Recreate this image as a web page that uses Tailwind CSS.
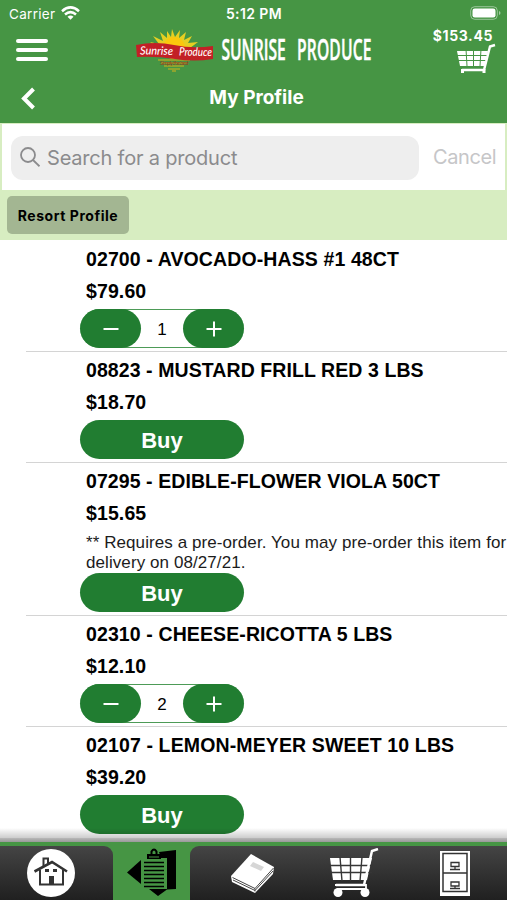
<!DOCTYPE html>
<html lang="en">
<head>
    <meta charset="UTF-8">
    <meta name="viewport" content="width=device-width, initial-scale=1.0">
    <title>Sunrise Produce - My Profile</title>
    <script src="https://cdn.jsdelivr.net/npm/@tailwindcss/browser@4"></script>
</head>
<body class="w-[507px] h-[900px] overflow-hidden bg-white text-black font-['Liberation_Sans',Arial,sans-serif] flex flex-col">
    <!-- Header -->
    <header class="h-[123px] shrink-0 bg-[#469544] text-white font-['Inter',sans-serif] flex flex-col">
        <div class="h-7 grid grid-cols-3 items-center pl-[9px] pr-[6px] text-[13.5px] leading-none">
            <div class="flex items-center gap-[6px]">
                <span class="tracking-[0.3px] pt-px">Carrier</span>
                <svg class="w-[19px] h-[14px] -mt-[2px]" viewBox="0 0 19 14" fill="none" stroke="#fff" stroke-width="2.5">
                    <path d="M1 5.2Q9.500-2.400 18 5.200"/>
                    <path d="M4 8.500Q9.500 3.700 15 8.500"/>
                    <path d="M9.500 13.800L6.500 10.700Q9.500 8.500 12.500 10.700Z" fill="#fff" stroke="none"/>
                </svg>
            </div>
            <span class="text-center font-semibold text-[14px] tracking-[0.4px] -ml-[2px] -mt-px">5:12 PM</span>
            <svg class="w-[31px] h-[14px] justify-self-end -mt-[2px]" viewBox="0 0 31 14">
                <rect x="0.700" y="0.700" width="26.600" height="12.600" rx="4" fill="none" stroke="#fff" stroke-opacity="0.450"/>
                <rect x="2.500" y="2.500" width="23" height="9" rx="2.300" fill="#fff"/>
                <path d="M29 5v4q1.500-.7 1.500-2T29 5z" fill="#fff" fill-opacity="0.500"/>
            </svg>
        </div>
        <div class="h-[49px] flex justify-between pl-4 pr-3">
            <button class="w-8 flex flex-col gap-[5px] pt-[11px]" aria-label="Menu">
                <span class="h-[4px] w-8 rounded-sm bg-white"></span>
                <span class="h-[4px] w-8 rounded-sm bg-white"></span>
                <span class="h-[4px] w-8 rounded-sm bg-white"></span>
            </button>
            <svg class="w-[240px] h-[49px] ml-[31px]" viewBox="0 0 240 49">
                <path d="M22 20L14 14 23 16 17 8 27 13 24 4 31 10 31 3 35 9 36 1 39 9 44 2 43 10 50 4 48 12 56 8 52 15 62 14 54 20Z" fill="#e6cf22"/>
                <circle cx="38" cy="20" r="11" fill="#fbc80d"/>
                <path d="M22 32h32M25 35h26M28 38h20M32 41h12M36 43h4" stroke="#a5a928" stroke-width="1.500"/>
                <path d="M0 17Q19 13 38 17T77 18L77 31Q58 34 39 31T1 29Z" fill="#c32026"/>
                <text x="4" y="27" transform="rotate(1 38 25)" fill="#fff" font-family="Lato" font-style="italic" font-weight="500" font-size="11.500" textLength="33" lengthAdjust="spacingAndGlyphs">Sunrise</text>
                <text x="43" y="27.500" transform="rotate(1 38 25)" fill="#fff" font-family="Lato" font-style="italic" font-weight="500" font-size="11.500" textLength="33" lengthAdjust="spacingAndGlyphs">Produce</text>
                <text x="24" y="36.500" fill="#9a3a20" font-family="Lato" font-style="italic" font-size="6" textLength="29">Simply the best</text>
                <text x="0" y="0" transform="translate(85.500 32) scale(.54 1)" fill="#fff" stroke="#fff" stroke-width="0.500" font-family="Open Sans" font-weight="600" font-size="29" textLength="119" lengthAdjust="spacing">SUNRISE</text>
                <text x="0" y="0" transform="translate(161 32) scale(.54 1)" fill="#fff" stroke="#fff" stroke-width="0.500" font-family="Open Sans" font-weight="600" font-size="29" textLength="138" lengthAdjust="spacing">PRODUCE</text>
            </svg>
            <div class="flex flex-col items-end">
                <span class="text-[14px] leading-[15px] font-bold tracking-[0.6px] mr-[2px]">$153.45</span>
                <svg class="w-[40px] h-[32px] -mt-px -mr-px" viewBox="0 0 40 32" fill="none" stroke="#fff">
                    <path d="M1 9h31l-3 15H4z" fill="#fff" stroke="none"/>
                    <path d="M0 13.500h33M2 18.500h30M10 7l1 17M17.500 7v17M25 7l-1 17" stroke="#469544" stroke-width="1"/>
                    <path d="M39 3l-5 1.500L28 28H6" stroke-width="2.400"/>
                    <path d="M6.500 27v4M28 27v4" stroke-width="3"/>
                </svg>
            </div>
        </div>
        <div class="relative h-[46px] flex items-center justify-center pb-[5px] pl-[6px]">
            <svg class="absolute left-[20px] top-[10px] w-[16px] h-[23px]" viewBox="0 0 16 23" fill="none" stroke="#fff" stroke-width="4"><path d="M13.500 2L4 11.500L13.500 21"/></svg>
            <h1 class="text-[19px] font-bold pt-px">My Profile</h1>
        </div>
    </header>

    <!-- Search -->
    <div class="h-[67px] shrink-0 bg-white border-l-2 border-r-2 border-t border-[#d7edc1] flex items-center pl-[9px] pt-px font-['Inter',sans-serif]">
        <div class="w-[408px] h-11 rounded-[12px] bg-[#eeeeee] flex items-center pl-[9px] text-[#8b8b8d]">
            <svg class="w-[20px] h-[20px] -mt-[2px]" viewBox="0 0 20 20" fill="none" stroke="currentColor" stroke-width="1.800"><circle cx="8" cy="8" r="7"/><path d="M13 13l6.500 6.300"/></svg>
            <span class="ml-[7px] text-[20px] tracking-[-0.2px]">Search for a product</span>
        </div>
        <span class="ml-[14px] text-[20px] text-[#c6c6c8] tracking-[-0.4px] -mt-[2px]">Cancel</span>
    </div>
    <div class="h-[50px] shrink-0 bg-[#d7edc1] pl-[7px] pt-[6px]">
        <button class="w-[122px] h-[38px] rounded-[5px] bg-[#a3b692] font-['Inter',sans-serif] font-bold text-[14px] tracking-[0.55px] whitespace-nowrap">Resort Profile</button>
    </div>

    <!-- Products -->
    <main class="relative h-[598px] overflow-hidden shrink-0">
        <article class="h-[112px] ml-[26px] pl-[55px] border-b border-[#d4d4d4]">
            <h2 class="pl-[5px] pt-[4px] h-[35px] leading-[30px] text-[19.5px] tracking-[0.11px] font-bold whitespace-nowrap">02700 - AVOCADO-HASS #1 48CT</h2>
            <p class="pl-[5px] h-[34px] leading-[32px] text-[19.5px] tracking-[0.11px] font-bold">$79.60</p>
            <div class="w-[164px] -ml-px h-[39px] rounded-full border-y border-[#4d9b57] flex items-center justify-between">
                <button class="w-[61px] h-[39px] rounded-full bg-[#217d31] text-white flex items-center justify-center"><svg class="w-4 h-4" viewBox="0 0 16 16" stroke="#fff" stroke-width="2"><path d="M.5 8h15"/></svg></button>
                <span class="text-[17px] pt-[2px]">1</span>
                <button class="w-[61px] h-[39px] rounded-full bg-[#217d31] text-white flex items-center justify-center"><svg class="w-4 h-4" viewBox="0 0 16 16" stroke="#fff" stroke-width="2"><path d="M.5 8h15M8 .5v15"/></svg></button>
            </div>
        </article>
        <article class="h-[111px] ml-[26px] pl-[55px] border-b border-[#d4d4d4]">
            <h2 class="pl-[5px] pt-[3px] h-[34px] leading-[30px] text-[19.5px] tracking-[0.08px] font-bold whitespace-nowrap">08823 - MUSTARD FRILL RED 3 LBS</h2>
            <p class="pl-[5px] h-[34px] leading-[32px] text-[19.5px] tracking-[0.11px] font-bold">$18.70</p>
            <button class="block w-[164px] -ml-px h-[39px] rounded-full bg-[#217d31] text-white text-[22px] font-bold leading-[41px]">Buy</button>
        </article>
        <article class="h-[153px] ml-[26px] pl-[55px] border-b border-[#d4d4d4]">
            <h2 class="pl-[5px] pt-[3px] h-[34px] leading-[30px] text-[19.5px] tracking-[0.08px] font-bold whitespace-nowrap">07295 - EDIBLE-FLOWER VIOLA 50CT</h2>
            <p class="pl-[5px] h-[36px] leading-[32px] text-[19.5px] tracking-[0.11px] font-bold">$15.65</p>
            <p class="pl-[5px] h-[40px] leading-[20px] text-[17px] tracking-[0.08px] whitespace-nowrap text-[#1c1c1c]">** Requires a pre-order. You may pre-order this item for<br>delivery on 08/27/21.</p>
            <button class="block w-[164px] -ml-px h-[39px] rounded-full bg-[#217d31] text-white text-[22px] font-bold leading-[41px]">Buy</button>
        </article>
        <article class="h-[111px] ml-[26px] pl-[55px] border-b border-[#d4d4d4]">
            <h2 class="pl-[5px] pt-[3px] h-[34px] leading-[30px] text-[19.5px] tracking-[0.11px] font-bold whitespace-nowrap">02310 - CHEESE-RICOTTA 5 LBS</h2>
            <p class="pl-[5px] h-[34px] leading-[32px] text-[19.5px] tracking-[0.11px] font-bold">$12.10</p>
            <div class="w-[164px] -ml-px h-[39px] rounded-full border-y border-[#4d9b57] flex items-center justify-between">
                <button class="w-[61px] h-[39px] rounded-full bg-[#217d31] text-white flex items-center justify-center"><svg class="w-4 h-4" viewBox="0 0 16 16" stroke="#fff" stroke-width="2"><path d="M.5 8h15"/></svg></button>
                <span class="text-[17px] pt-[2px]">2</span>
                <button class="w-[61px] h-[39px] rounded-full bg-[#217d31] text-white flex items-center justify-center"><svg class="w-4 h-4" viewBox="0 0 16 16" stroke="#fff" stroke-width="2"><path d="M.5 8h15M8 .5v15"/></svg></button>
            </div>
        </article>
        <article class="h-[111px] ml-[26px] pl-[55px]">
            <h2 class="pl-[5px] pt-[3px] h-[34px] leading-[30px] text-[19.5px] tracking-[0.13px] font-bold whitespace-nowrap">02107 - LEMON-MEYER SWEET 10 LBS</h2>
            <p class="pl-[5px] h-[34px] leading-[32px] text-[19.5px] tracking-[0.11px] font-bold">$39.20</p>
            <button class="block w-[164px] -ml-px h-[39px] rounded-full bg-[#217d31] text-white text-[22px] font-bold leading-[41px]">Buy</button>
        </article>
        <!-- shadow cast by the tab bar -->
        <div class="absolute inset-x-0 bottom-0 h-[10px] bg-linear-to-b from-black/0 to-black/20"></div>
    </main>

    <!-- Tab bar -->
    <div class="h-1 shrink-0 bg-linear-to-b from-[#b8b8b8] to-[#999999]"></div>
    <nav class="h-[58px] shrink-0 bg-[#469544] pt-1 flex">
        <div class="w-[113px] h-[54px] rounded-tr-[9px] bg-linear-to-b from-[#454545] to-[#202020] flex items-center pl-[27px]">
            <svg class="w-[48px] h-[48px]" viewBox="0 0 48 48" fill="none" stroke="#333">
                <circle cx="24" cy="24" r="24" fill="#fff" stroke="none"/>
                <path d="M7.500 22.500L25 13L40 22.500" stroke-width="2.600"/>
                <path d="M13 21v14.500h23V21M16.500 17V9.500H21V14" stroke-width="2"/>
                <path d="M18 20h4v3h-4zM26 20h4v3h-4zM22 27h5v8h-5z" fill="#333" stroke="none"/>
            </svg>
        </div>
        <div class="w-[77px] h-[54px] flex justify-center pt-[2px]">
            <svg class="w-[50px] h-[50px]" viewBox="0 0 50 50">
                <path d="M0 24.500L14 12v24z"/>
                <path d="M32 4L49 2v39l-9 .5L31 48l-9-7h18V10h-6z"/>
                <path d="M17 13h20v28H17z" fill="#469544"/>
                <path d="M17 14.500h20M17 18.500h20M17 22.500h20M17 26.500h20M17 30.500h20M17 34.500h20M17 38.500h20" stroke="#000" stroke-width="1.500"/>
                <path d="M20 6h14v5H20z"/>
                <path d="M24.500 7V3.500q2.500-4 5 0V7" fill="none" stroke="#000" stroke-width="2"/>
                <path d="M22 9h10" stroke="#469544" stroke-width="1"/>
            </svg>
        </div>
        <div class="w-[317px] h-[54px] rounded-tl-[9px] bg-linear-to-b from-[#454545] to-[#202020] flex items-start pl-[41px] pt-[2px]">
            <svg class="w-[44px] h-[42px] mt-[5px]" viewBox="0 0 44 42">
                <path d="M0 23L20 1L43 14L42 21L24 40L1 29Z" fill="#fff"/>
                <path d="M1.500 24.500L24 35.500L42.500 15M24 35.500V38.500M2 27L24 37.500L42 18" fill="none" stroke="#444" stroke-width="1"/>
                <path d="M22 9l11 5-3 4-11-5z" fill="#d6d6d6"/>
            </svg>
            <svg class="w-[50px] h-[50px] ml-[54px]" viewBox="0 0 50 50" fill="none" stroke="#fff">
                <path d="M1 10h42l-5 22H4z" fill="#fff" stroke="none"/>
                <path d="M0 17.500h44M1 24.500h42M11 9l2 24M21.500 9v24M33 9l-2 24" stroke="#363636" stroke-width="1.400"/>
                <path d="M49 1l-6 2L35 37H7" stroke-width="2.500"/>
                <path d="M6 37h31v4H9v3" stroke-width="1.800"/>
                <circle cx="9" cy="44.500" r="4.500" fill="#fff" stroke="none"/>
                <circle cx="36" cy="44.500" r="4.500" fill="#fff" stroke="none"/>
            </svg>
            <svg class="w-[30px] h-[45px] ml-[61px] mt-[3px]" viewBox="0 0 30 45" fill="none" stroke="#333">
                <path d="M0 0h30v45H0z" fill="#fff" stroke="none"/>
                <path d="M3 2.500h24v38H3zM3 22h24" stroke-width="1.500"/>
                <path d="M11 11.500h8v4h-8zM10 18.500h10M15 16v2M11 31h8v4h-8zM10 37.500h10M15 35v2" stroke-width="1.300"/>
            </svg>
        </div>
    </nav>
</body>
</html>
